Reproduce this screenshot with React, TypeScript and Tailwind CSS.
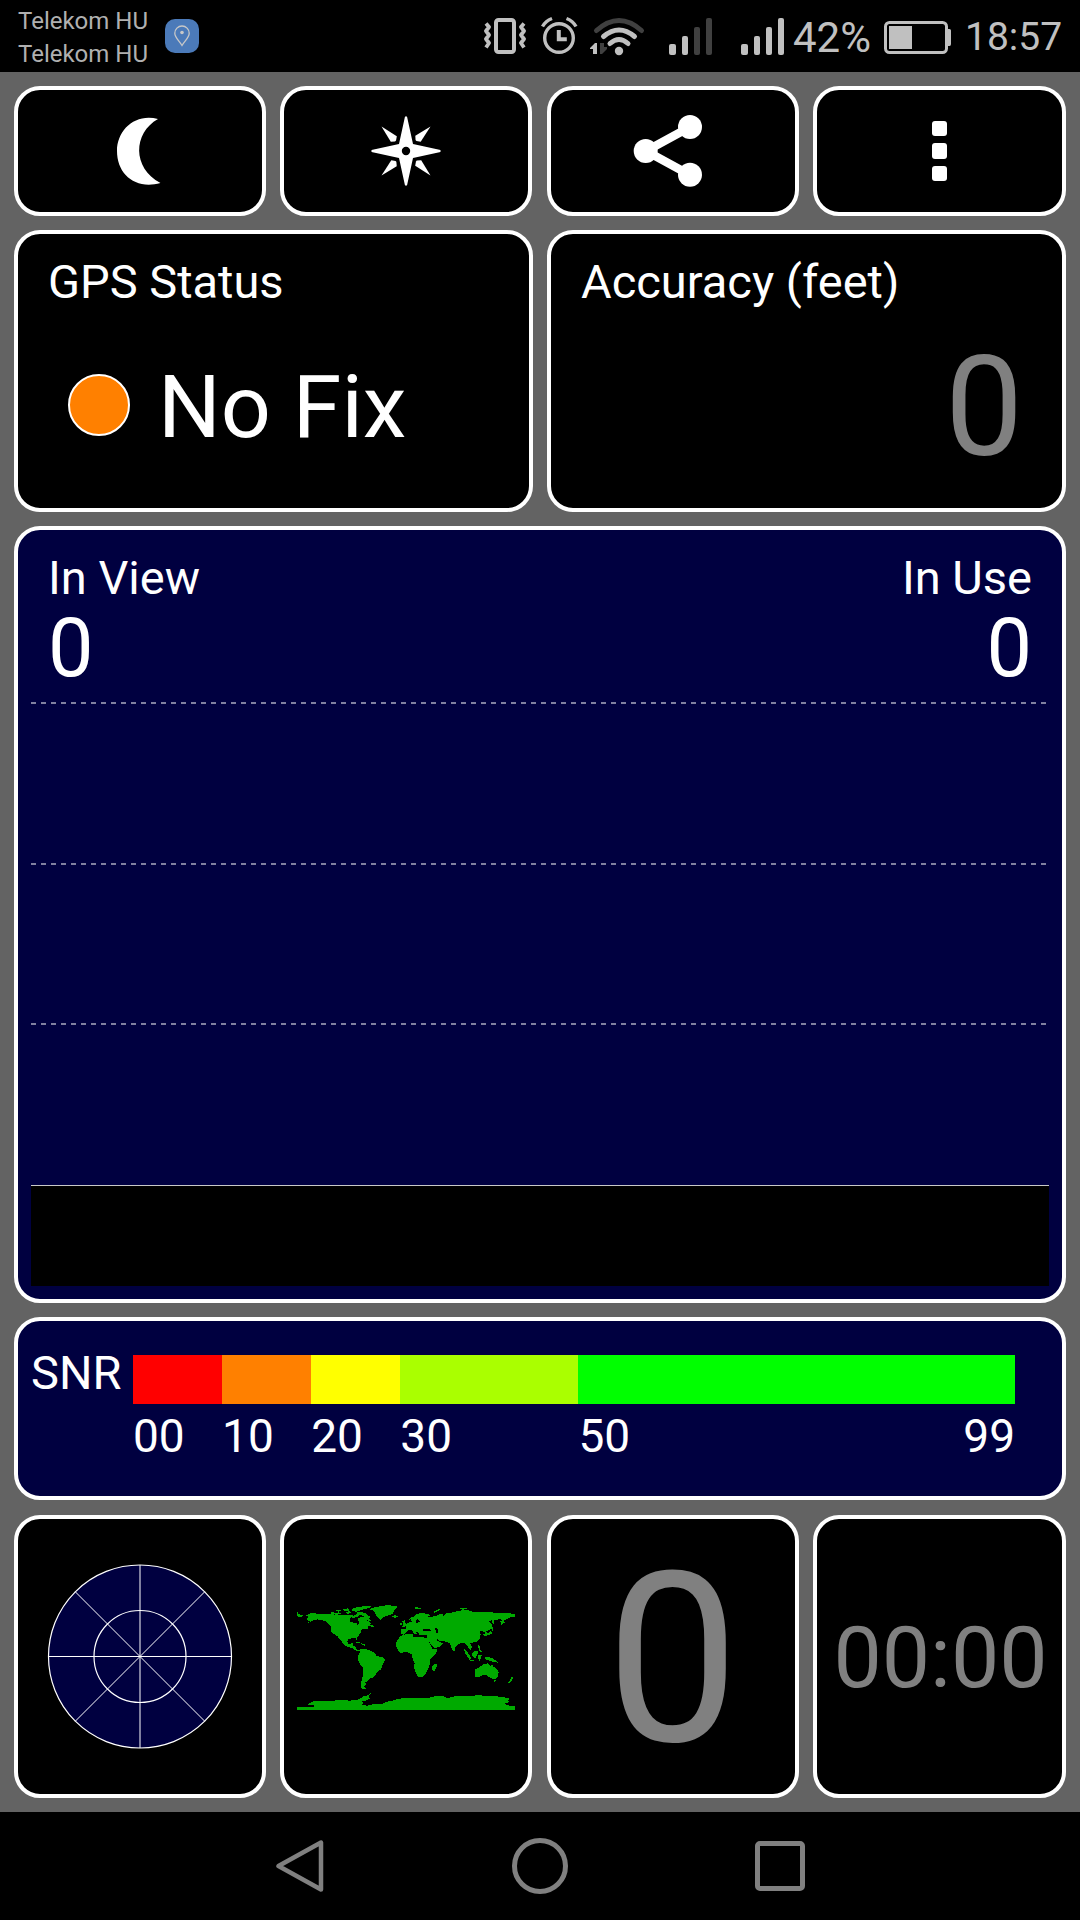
import type { ReactNode } from 'react'
import clsx from 'clsx'

const SNR_LEVELS = [
  { label: '00', span: 10, color: 'bg-[#ff0000]' },
  { label: '10', span: 10, color: 'bg-[#ff8000]' },
  { label: '20', span: 10, color: 'bg-[#ffff00]' },
  { label: '30', span: 20, color: 'bg-[#aaff00]' },
  { label: '50', span: 49, color: 'bg-[#00ff00]' },
]

// Land outlines, north america first
const LAND = [
  '51,67 55,67 55,72 62,74 70,77 66,81 57,80 51,79',
  '78,76 90,70 105,70 120,72 135,72 152,73 170,74 186,74 200,76 212,74 222,77 232,70 236,75 234,82 228,80 222,84 214,82 208,90 212,96 222,98 230,100 233,106 237,102 236,94 234,86 242,80 250,80 256,84 260,90 266,94 272,100 270,106 262,110 266,114 258,118 250,116 244,120 242,128 236,136 230,144 230,152 226,144 216,145 206,147 202,154 204,162 210,164 216,158 221,158 218,167 226,169 229,178 238,182 234,184 224,180 216,174 206,171 196,168 188,160 184,152 178,148 174,140 166,134 156,128 152,120 152,108 144,102 136,94 124,90 112,88 100,91 92,96 82,100 90,94 84,92 80,86 86,82',
  '150,68 160,66 166,70 176,67 184,72 172,74 156,73',
  '168,61 178,59 184,63 176,65',
  '188,57 204,55 210,61 196,64',
  '196,66 208,64 214,69 202,72',
  '214,57 230,52 250,49 270,48 276,51 262,55 250,58 240,62 226,65 216,62',
  '228,64 244,66 256,70 264,76 272,80 266,86 274,92 266,93 258,88 254,80 244,76 234,74',
  '270,105 277,104 283,110 274,112',
  '272,55 284,52 296,50 310,47 326,45 338,48 354,50 346,56 342,64 338,72 328,75 318,78 308,84 302,90 296,86 290,78 286,70 280,62 270,60',
  '336,78 346,76 354,79 348,83 338,82',
  '224,156 236,155 246,161 238,160 228,158',
  '246,163 256,163 256,167 247,166',
  '238,180 246,176 256,178 268,179 276,185 284,188 288,196 298,200 310,203 316,208 312,218 306,226 304,238 294,243 288,252 280,262 270,266 262,274 256,276 258,284 252,288 258,296 248,297 242,292 244,276 248,260 250,244 250,232 242,226 236,214 232,204 236,194 240,186',
  '362,118 378,118 380,110 374,108 380,102 386,98 396,95 392,88 388,90 390,84 400,80 408,74 420,70 434,70 446,73 452,78 440,80 448,82 460,79 474,76 478,71 486,71 490,77 500,70 514,68 522,66 540,62 552,60 566,61 582,67 600,66 612,66 636,67 650,69 672,70 690,70 705,73 705,82 692,82 684,86 672,92 664,106 662,98 668,92 660,87 650,90 636,90 626,94 634,100 636,110 632,118 624,122 618,124 622,132 618,136 614,126 606,124 600,124 602,134 600,144 598,150 588,156 576,158 570,160 576,170 572,180 566,176 562,168 556,162 550,158 540,160 532,166 526,170 526,180 520,184 514,172 510,160 500,156 490,153 480,153 470,146 472,152 480,156 488,160 480,170 466,174 456,168 448,156 442,148 440,136 426,136 420,136 414,128 406,122 412,134 400,130 396,120 386,120 378,126 372,134 362,132',
  '366,94 374,90 376,98 382,106 374,110 366,110 370,103',
  '360,99 366,98 366,105 360,106',
  '352,150 362,138 374,134 388,131 398,132 400,140 410,142 426,142 440,143 446,154 452,166 458,178 472,178 468,190 458,200 450,208 450,222 446,234 442,242 436,254 426,261 414,261 406,246 402,232 404,220 398,208 396,194 388,188 374,186 362,190 354,180 348,170 348,160',
  '458,226 466,222 471,224 468,236 462,244 456,240',
  '400,53 412,52 424,54 418,58 406,57',
  '460,66 474,58 482,57 476,63 464,68',
  '540,55 556,53 562,57 548,59',
  '638,88 644,96 640,104 636,96',
  '636,110 640,116 638,124 634,116',
  '660,93 672,90 674,98 664,104',
  '610,132 622,130 634,122 636,132 624,136 612,138',
  '552,177 560,184 568,194 574,206 570,208 562,200 556,190',
  '576,190 586,182 594,182 592,196 586,204 578,200',
  '566,208 578,210 586,213 570,212',
  '594,195 606,196 604,200 600,212 596,212',
  '594,166 600,168 600,178 606,184 600,188 596,178',
  '614,202 628,202 640,206 650,214 654,218 640,216 628,212 618,208',
  '586,238 598,232 608,224 618,222 624,220 630,228 636,222 640,230 650,236 656,246 654,260 644,268 632,264 620,256 608,256 596,262 586,260',
  '640,270 648,270 646,276 642,275',
  '694,262 702,263 696,270 690,280 682,280 690,272',
  '51,351 100,351 104,345 84,344 86,340 100,340 90,337 108,332 130,334 160,332 196,329 204,332 226,331 240,326 250,319 264,316 272,310 266,319 270,326 256,332 244,334 250,340 244,344 262,347 280,342 306,342 322,335 340,331 352,327 372,324 400,325 424,323 448,323 466,318 490,318 504,326 516,320 540,318 566,319 590,316 620,317 650,319 670,322 688,324 684,332 690,336 674,340 680,346 705,348 705,360 51,360',
]

const WATER = [
  '428,119 436,117 450,117 452,122 440,122 429,123',
  '466,115 472,114 474,124 472,131 467,126',
  '408,92 414,86 417,92 424,92 418,97 408,98',
]

function Panel({ children, className }: { children: ReactNode; className?: string }) {
  return (
    <div className={clsx('rounded-[26px] border-4 border-white', className)}>{children}</div>
  )
}

function StatusBar() {
  return (
    <div className="flex h-[72px] bg-black text-[#b0b0b0]">
      <div className="ml-[18px] mt-[5px] w-[147px] text-[24px] leading-[33px] whitespace-nowrap">
        <div>Telekom HU</div>
        <div>Telekom HU</div>
      </div>
      <div className="mt-[19px] flex size-[34px] items-center justify-center rounded-[10px] bg-[#4b7ab9]">
        <svg width="18" height="22" viewBox="0 0 18 22" fill="none" stroke="#c8c8c8" strokeWidth="1.3">
          <path d="M9 20.5C6 15.5 1.8 12.5 1.8 8.2a7.2 7.2 0 0 1 14.4 0C16.2 12.5 12 15.5 9 20.5Z" />
          <circle cx="9" cy="7.5" r="1.8" fill="#c8c8c8" stroke="none" />
        </svg>
      </div>

      {/* vibrate, alarm, wifi and both sims */}
      <svg className="ml-[281px] text-[#c0c0c0]" width="310" height="72" viewBox="480 0 310 72" fill="none" stroke="currentColor">
        <rect x="496" y="20" width="18" height="32" rx="2.5" strokeWidth="4" />
        <path d="M486 23.5l3 3.500-3 4 3 4-3 4 3 4-3 4.500M524 23.500l-3 3.500 3 4-3 4 3 4-3 4 3 4.500" strokeWidth="3.800" strokeLinejoin="round" />
        <circle cx="559" cy="38" r="14.300" strokeWidth="3.400" />
        <path d="M558.800 30v9.200h8" strokeWidth="4" />
        <path d="M542.500 26.500q3-5.500 9.500-8M576 26.500q-3-5.500-9.500-8" strokeWidth="3.400" />
        <path d="M596.500 30.500q22.500-20 45 0" stroke="#404040" strokeWidth="5" strokeLinecap="round" />
        <path d="M603.500 36.500q15.500-13 31 0M610 43.500q9-8 18 0" strokeWidth="5" strokeLinecap="round" />
        <circle cx="619" cy="51" r="4.200" fill="currentColor" stroke="none" />
        <path d="M590 48l5-5h2v11h-4v-5h-3z" fill="currentColor" stroke="none" />
        <path d="M600 43h4v4h3v2l-5 5h-2z" fill="#404040" stroke="none" />
        <g fill="currentColor" stroke="none">
          <rect x="669" y="44" width="7" height="11" rx="2" />
          <rect x="682" y="36" width="6" height="19" rx="2" />
          <rect x="694" y="27" width="6" height="28" rx="2" fill="#404040" />
          <rect x="706" y="18" width="6" height="37" rx="2" fill="#404040" />
          <rect x="741" y="44" width="7" height="11" rx="2" />
          <rect x="754" y="36" width="6" height="19" rx="2" />
          <rect x="766" y="27" width="6" height="28" rx="2" />
          <rect x="778" y="18" width="6" height="37" rx="2" />
        </g>
      </svg>
      <div className="ml-[3px] mt-[17px] w-[91px] text-[42px] leading-none whitespace-nowrap text-[#c0c0c0]">42%</div>
      <svg className="mt-[21px]" width="67" height="33" viewBox="0 0 67 33">
        <rect x="1.500" y="1.500" width="61" height="30" rx="4" fill="none" stroke="#c0c0c0" strokeWidth="3" />
        <path d="M5 5h23v23H5zM64 8h1.500q1.500 0 1.500 1.500v13.500q0 2-1.500 2H64z" fill="#c0c0c0" />
      </svg>
      <div className="ml-[14px] mt-[18px] text-[39px] leading-none whitespace-nowrap text-[#c0c0c0]">18:57</div>
    </div>
  )
}

function Toolbar() {
  return (
    <div className="grid grid-cols-[252px_252px_252px_253px] justify-between">
      <Panel className="bg-black">
        <svg className="h-full w-full" viewBox="18 90 244 122" fill="#fff">
          <path d="M158 119C135 113 117 130 117 151c0 23 18 39 43.500 32C132 168 133 133 158 119Z" />
        </svg>
      </Panel>
      <Panel className="bg-black">
        <svg className="h-full w-full" viewBox="-122 -61 244 122" fill="#fff">
          <path fillRule="evenodd" d="M-1-34.500h2L7-7 34.500-1v2L7 7 1 34.500h-2L-7 7-34.500 1v-2L-7-7ZM4.200 0a4.200 4.200 0 1 0-8.400 0 4.200 4.200 0 0 0 8.400 0Z" />
          {[0, 90, 180, 270].map((angle) => (
            <path key={angle} transform={`rotate(${angle})`} d="M-24.500-24.500l15.300 9.800-.8 4.200q-.4.800-1 .900l-4.200.3Z" />
          ))}
        </svg>
      </Panel>
      <Panel className="bg-black">
        <svg className="h-full w-full" viewBox="551 90 244 122" fill="#fff">
          <path d="M690 127l-44 24 44 24" fill="none" stroke="#fff" strokeWidth="8.500" />
          <circle cx="645.700" cy="151" r="12" />
          <circle cx="690" cy="127" r="12" />
          <circle cx="690" cy="174.700" r="12" />
        </svg>
      </Panel>
      <Panel className="flex flex-col items-center justify-center gap-[7px] bg-black">
        <div className="size-[15.500px] rounded-[3px] bg-white" />
        <div className="size-[15.500px] rounded-[3px] bg-white" />
        <div className="size-[15.500px] rounded-[3px] bg-white" />
      </Panel>
    </div>
  )
}

function Fix() {
  return (
    <div className="grid grid-cols-2 gap-[14px]">
      <Panel className="bg-black px-[30px] pt-[24px]">
        <div className="text-[47px] leading-none">GPS Status</div>
        <div className="mt-[56px] flex items-start pl-[20px]">
          <div className="mt-[13px] size-[62px] rounded-full border-2 border-white bg-[#ff8000]" />
          <div className="ml-[28px] mt-[2px] text-[88px] leading-none">No Fix</div>
        </div>
      </Panel>
      <Panel className="bg-black px-[30px] pt-[24px]">
        <div className="text-[47px] leading-none">Accuracy (feet)</div>
        <div className="mt-[33px] pr-[9px] text-right text-[139px] leading-none text-[#808080]">0</div>
      </Panel>
    </div>
  )
}

function GridLine() {
  return (
    <div className="h-[2px] bg-[repeating-linear-gradient(90deg,#8080a0_0_5px,transparent_5px_10px)]" />
  )
}

function Satellites() {
  return (
    <Panel className="flex flex-col bg-[#000040] px-[13px]">
      <div className="flex h-[172px] justify-between px-[17px] pt-[24px]">
        <div>
          <div className="text-[47px] leading-none">In View</div>
          <div className="mt-[7px] text-[81px] leading-none">0</div>
        </div>
        <div className="text-right">
          <div className="text-[47px] leading-none">In Use</div>
          <div className="mt-[7px] text-[81px] leading-none">0</div>
        </div>
      </div>
      <div className="flex h-[483px] flex-col gap-[158.500px]">
        <GridLine />
        <GridLine />
        <GridLine />
      </div>
      <div className="h-[101px] border-t border-[#c8c8c8] bg-black" />
    </Panel>
  )
}

function Snr() {
  return (
    <Panel className="flex bg-[#000040] pl-[13px] leading-none">
      <div className="mt-[28px] w-[102px] text-[47px]">SNR</div>
      <div className="mt-[34px] w-[882px] text-[46px]">
        <div className="flex h-[49px]">
          {SNR_LEVELS.map((level) => (
            <div key={level.label} className={level.color} style={{ flexGrow: level.span, flexBasis: 0 }} />
          ))}
        </div>
        <div className="mt-[9px] flex">
          {SNR_LEVELS.map((level) => (
            <div key={level.label} className="flex justify-between" style={{ flexGrow: level.span, flexBasis: 0 }}>
              <span>{level.label}</span>
              {level.label === '50' && <span>99</span>}
            </div>
          ))}
        </div>
      </div>
    </Panel>
  )
}

function Gauges() {
  return (
    <div className="mt-px grid grid-cols-[252px_252px_252px_253px] justify-between">
      <Panel className="bg-black">
        <svg className="h-full w-full" viewBox="-122 -137.500 244 275" fill="none" stroke="#fff" strokeWidth="1.200">
          <circle r="91.500" fill="#000040" />
          <circle r="46" />
          <path d="M-91.500 0h183M0-91.500v183M-64.700-64.700 64.700 64.700M64.700-64.700-64.700 64.700" strokeWidth="1" />
        </svg>
      </Panel>
      <Panel className="flex justify-center bg-black pt-[86px]">
        <svg width="218" height="105" viewBox="51 45 654 315" shapeRendering="crispEdges">
          {LAND.map((points) => <polygon key={points} points={points} fill="#00aa00" />)}
          {WATER.map((points) => <polygon key={points} points={points} fill="#000" />)}
        </svg>
      </Panel>
      <Panel className="bg-black pt-[23px] text-center text-[237px] leading-none text-[#808080]">0</Panel>
      <Panel className="flex justify-center bg-black pt-[96px] pl-[2px] text-[86px] leading-none text-[#808080]">00:00</Panel>
    </div>
  )
}

function NavBar() {
  return (
    <div className="flex h-[108px] items-center justify-center bg-black">
      <svg className="mr-[188px]" width="48" height="54" viewBox="0 0 48 54">
        <path d="M45 3.500v47L2.500 27Z" fill="none" stroke="#808080" strokeWidth="4.500" strokeLinejoin="round" />
      </svg>
      <div className="size-[56px] rounded-full border-[5px] border-[#808080]" />
      <div className="ml-[187px] size-[50px] rounded-[5px] border-[5px] border-[#808080]" />
    </div>
  )
}

export default function App() {
  return (
    <div className="h-[1920px] w-[1080px] overflow-hidden bg-[#636363] font-['Roboto',sans-serif] text-white">
      <StatusBar />
      <div className="grid h-[1740px] grid-rows-[130px_282px_777px_183px_284px] gap-[14px] p-[14px]">
        <Toolbar />
        <Fix />
        <Satellites />
        <Snr />
        <Gauges />
      </div>
      <NavBar />
    </div>
  )
}
